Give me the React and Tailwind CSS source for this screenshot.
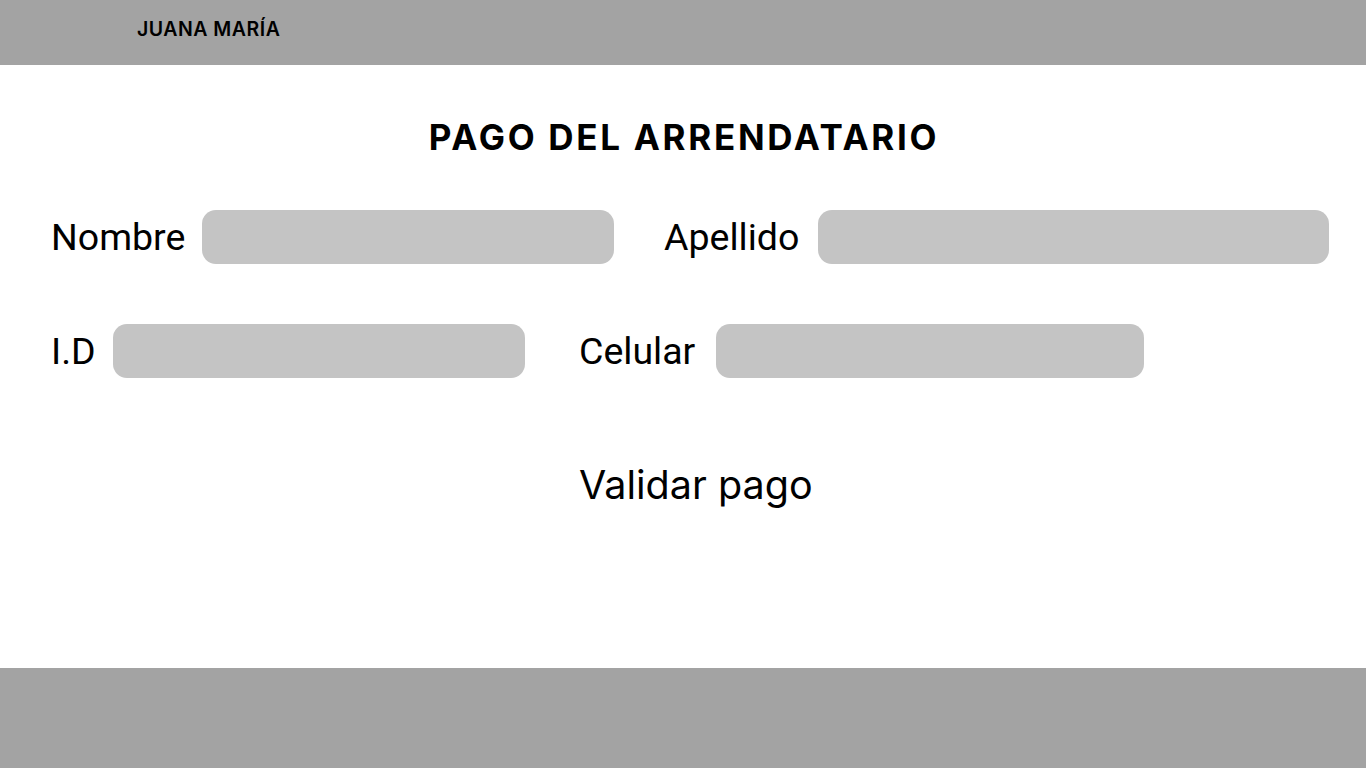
export default function App() {
    return (
        <div className="flex flex-col h-[768px] w-full bg-white text-black" style={{ fontFamily: 'Inter, "Noto Sans", sans-serif' }}>
            <header className="h-[65px] bg-[#a3a3a3] flex items-center pl-[137px] pb-[6px]">
                <span className="text-[19.5px] font-semibold tracking-[0.5px]">JUANA MARÍA</span>
            </header>

            <main className="flex-1 flex flex-col">
                <h1 className="mt-[47px] text-center text-[35px] font-bold tracking-[2.7px] leading-none h-[50px] flex items-center justify-center pl-[2px]">
                    PAGO DEL ARRENDATARIO
                </h1>

                <div className="mt-[47px] flex items-center pl-[51px] font-['Roboto',sans-serif] text-[37.5px]">
                    <label className="w-[151px]">Nombre</label>
                    <div className="w-[412px] h-[54px] rounded-[14px] bg-[#c4c4c4]" />
                    <label className="ml-[50px] w-[154px]">Apellido</label>
                    <div className="w-[511px] h-[54px] rounded-[14px] bg-[#c4c4c4]" />
                </div>

                <div className="mt-[58px] flex items-center pl-[51px] font-['Roboto',sans-serif] text-[37.5px]">
                    <label className="w-[62px]">I.D</label>
                    <div className="w-[412px] h-[54px] rounded-[14px] bg-[#c4c4c4]" />
                    <label className="ml-[54px] w-[137px]">Celular</label>
                    <div className="w-[428px] h-[54px] rounded-[14px] bg-[#c4c4c4]" />
                </div>

                <div className="mt-[86px] pl-[579px]">
                    <button className="text-[39.5px] leading-none">Validar pago</button>
                </div>
            </main>

            <footer className="h-[100px] bg-[#a3a3a3]" />
        </div>
    )
}
